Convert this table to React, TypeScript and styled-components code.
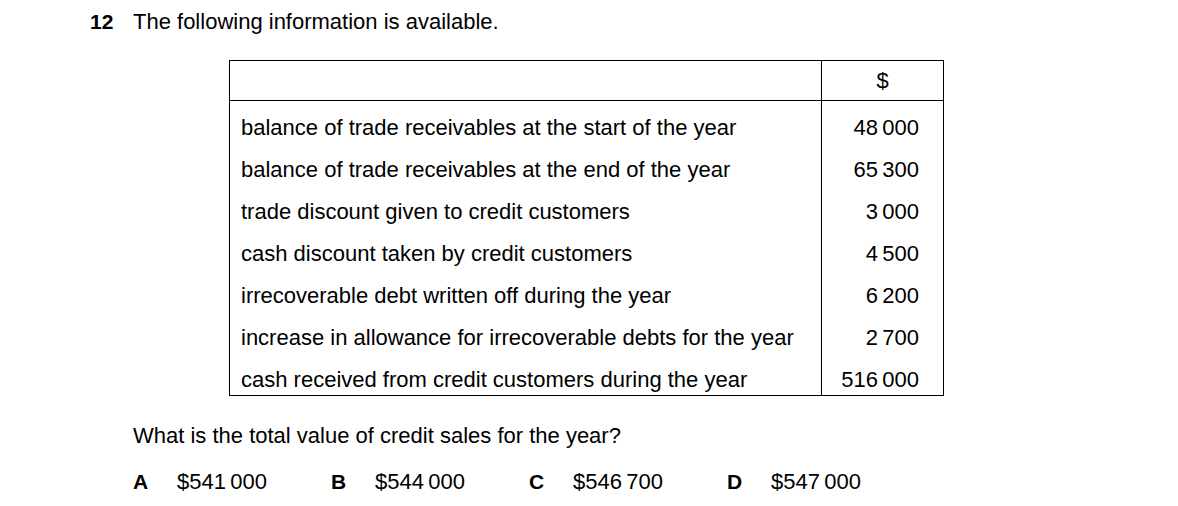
import styled, { createGlobalStyle } from "styled-components";

const GlobalStyle = createGlobalStyle`
    body {
        margin: 0;
        background: #fff;
        color: #000;
        font-family: "Liberation Sans", Arial, sans-serif;
    }
`

const Page = styled.div`
    padding: 9px 0 0 90px;
    font-size: 22px;
    line-height: 25px;
`

const Heading = styled.div`
    display: flex;
`

const Number = styled.span`
    width: 43px;
    font-weight: bold;
    font-size: 21px;
`

const Body = styled.div`
    padding-left: 43px;
`

const Table = styled.div`
    margin: 26px 0 0 96px;
    width: 713px;
    border: 1px solid #000;
    display: grid;
    grid-template-columns: 592px 1fr;
`

const HeadCell = styled.div<{ $divider?: boolean }>`
    height: 39px;
    line-height: 40px;
    text-align: center;
    border-bottom: 1px solid #000;
    border-right: ${props => props.$divider ? '1px solid #000' : 'none'};
`

const Column = styled.div<{ $divider?: boolean; $numbers?: boolean }>`
    padding: 6px ${props => props.$numbers ? '24px' : '0'} 0 ${props => props.$numbers ? '0' : '11px'};
    text-align: ${props => props.$numbers ? 'right' : 'left'};
    border-right: ${props => props.$divider ? '1px solid #000' : 'none'};
`

const Cell = styled.div<{ $last?: boolean }>`
    height: ${props => props.$last ? '36px' : '42px'};
    line-height: 42px;
    white-space: nowrap;
`

const Question = styled.p`
    margin: 27px 0 0;
`

const Options = styled.div`
    display: flex;
    margin-top: 21px;
`

const Option = styled.div`
    display: flex;
    width: 198px;
`

const Letter = styled.span`
    width: 44px;
    font-weight: bold;
    font-size: 21px;
`

const rows: [string, string][] = [
    ["balance of trade receivables at the start of the year", "48\u2009000"],
    ["balance of trade receivables at the end of the year", "65\u2009300"],
    ["trade discount given to credit customers", "3\u2009000"],
    ["cash discount taken by credit customers", "4\u2009500"],
    ["irrecoverable debt written off during the year", "6\u2009200"],
    ["increase in allowance for irrecoverable debts for the year", "2\u2009700"],
    ["cash received from credit customers during the year", "516\u2009000"],
]

const answers = [
    { letter: "A", value: "$541\u2009000" },
    { letter: "B", value: "$544\u2009000" },
    { letter: "C", value: "$546\u2009700" },
    { letter: "D", value: "$547\u2009000" },
]

const App = () => {
    return (
        <Page>
            <GlobalStyle />
            <Heading>
                <Number>12</Number>
                <span>The following information is available.</span>
            </Heading>
            <Body>
                <Table>
                    <HeadCell $divider />
                    <HeadCell>$</HeadCell>
                    <Column $divider>
                        {rows.map(([label], i) => (
                            <Cell key={label} $last={i === rows.length - 1}>{label}</Cell>
                        ))}
                    </Column>
                    <Column $numbers>
                        {rows.map(([label, amount], i) => (
                            <Cell key={label} $last={i === rows.length - 1}>{amount}</Cell>
                        ))}
                    </Column>
                </Table>
                <Question>What is the total value of credit sales for the year?</Question>
                <Options>
                    {answers.map(a => (
                        <Option key={a.letter}>
                            <Letter>{a.letter}</Letter>
                            <span>{a.value}</span>
                        </Option>
                    ))}
                </Options>
            </Body>
        </Page>
    )
}

export default App;
